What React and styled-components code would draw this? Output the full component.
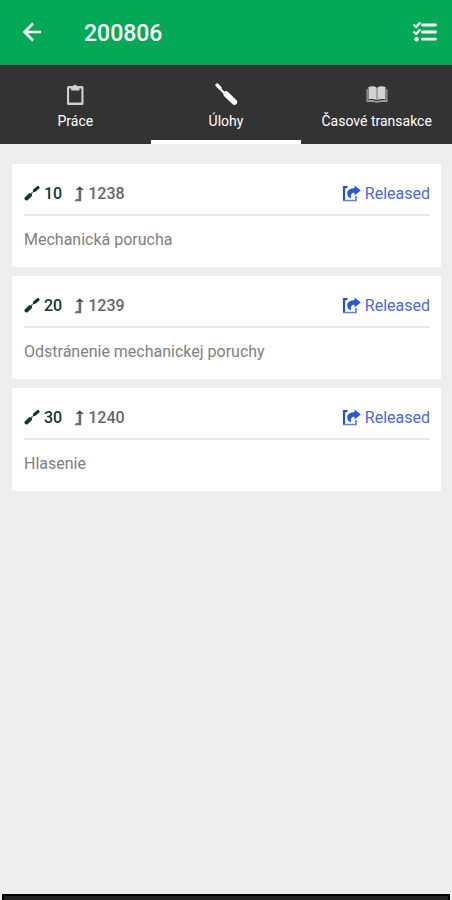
import React from "react";
import styled, { createGlobalStyle } from "styled-components";

const tasks = [
  { id: 10, number: 1238, status: "Released", text: "Mechanická porucha" },
  {
    id: 20,
    number: 1239,
    status: "Released",
    text: "Odstránenie mechanickej poruchy",
  },
  { id: 30, number: 1240, status: "Released", text: "Hlasenie" },
];

const BackIcon = () => (
  <svg width='20' height='20' viewBox='0 0 20 20' fill='none' aria-hidden='true'>
    <path d='M19 10H3M11 1.500L2.500 10l8.500 8.500' stroke='#fff' strokeWidth='2.500' />
  </svg>
);

const ChecklistIcon = () => (
  <svg width='24' height='20' viewBox='0 0 24 20' fill='none' aria-hidden='true'>
    <path d='M9.500 3h13M9.500 10h13M9.500 17.200h13' stroke='#fff' strokeWidth='2.800' strokeLinecap='round' />
    <path d='M1.200 3.200l2 1.800L6.700 1M1.200 10.200l2 1.800L6.700 8' stroke='#fff' strokeWidth='2.200' strokeLinecap='round' />
    <circle cx='3.500' cy='17.200' r='2.200' fill='#fff' />
  </svg>
);

const ClipboardIcon = () => (
  <svg width='20' height='24' viewBox='0 0 20 24' aria-hidden='true'>
    <path
      fillRule='evenodd'
      fill='#d0d0d0'
      d='M3.500 3H8a2.200 2.200 0 0 1 4 0h5a1.500 1.500 0 0 1 1.500 1.500v16A1.500 1.500 0 0 1 17 22H3.500A1.500 1.500 0 0 1 2 20.500v-16A1.500 1.500 0 0 1 3.500 3zm.6 2.500V19.500h12.300V5.500h-2V7.500H6.100V5.500z'
    />
  </svg>
);

const ScrewdriverIcon = () => (
  <svg width='24' height='24' viewBox='0 0 24 24' fill='none' aria-hidden='true'>
    <path d='M3 2l3 3' stroke='#fff' strokeWidth='3.200' strokeLinecap='round' />
    <path d='M4 3.500l8 8.500' stroke='#fff' strokeWidth='2' />
    <path
      d='M9.500 10c.5-1.700 2.400-2.600 4-1.500l9.300 8.900c1.700 2.600-1 5.800-3.900 4.200l-8.700-8.300c-.9-1.100-1.200-2.200-.7-3.300z'
      fill='#fff'
    />
  </svg>
);

const BookIcon = () => (
  <svg width='22' height='18' viewBox='0 0 22 18' aria-hidden='true'>
    <path d='M.5 3h1.300v11.300c3.500-.8 6.200-.4 8 .7h2.400c1.800-1.100 4.500-1.500 8-.7V3h1.300v13h-7.500c-.5 1-5.500 1-6 0H.5z' fill='#9c9c9c' />
    <path d='M2.500 1C5.500-.1 8.500 0 10.700 1.800v12.500c-2-1.400-4.900-1.700-8.200-.9z' fill='#d2d2d2' />
    <path d='M19.500 1c-3-1.100-6-1-8.200.8v12.500c2-1.400 4.900-1.700 8.200-.9z' fill='#d2d2d2' />
  </svg>
);

const ToolIcon = () => (
  <svg width='16' height='16' viewBox='0 0 16 16' fill='none' aria-hidden='true'>
    <path d='M5.500 9.500l5-5' stroke='#6b8078' strokeWidth='1.300' />
    <path d='M2.500 12.500L6 9.200' stroke='#0d4031' strokeWidth='4' strokeLinecap='round' />
    <path d='M10.500 4.500L14 1.500' stroke='#14372d' strokeWidth='3' strokeLinecap='round' />
  </svg>
);

const LevelUpIcon = () => (
  <svg width='10' height='18' viewBox='0 0 10 18' fill='none' aria-hidden='true'>
    <path d='M1.500 5L5.800 1.200 10 5z' fill='#555' />
    <path d='M4.600 4h2.600v12.300H.3l2-2.300h2.300z' fill='#6a6a6a' />
  </svg>
);

const ReleaseIcon = () => (
  <svg width='19' height='18' viewBox='0 0 19 18' fill='none' aria-hidden='true'>
    <path d='M5.500 2.200H2v13.300' stroke='#2350d4' strokeWidth='2.200' />
    <path d='M1 15.500h13V11' stroke='#5f80e3' strokeWidth='1.700' />
    <path
      d='M12.500.5l6.300 5-6.300 5V7.800C9.500 7.500 8.500 9.500 9 13.200 6.500 12.500 5 10.500 5.200 8 5.500 5 8.500 3.200 12.500 3.200z'
      fill='#2458df'
    />
  </svg>
);

const tabs = [
  { label: "Práce", icon: <ClipboardIcon /> },
  { label: "Úlohy", icon: <ScrewdriverIcon />, active: true },
  { label: "Časové transakce", icon: <BookIcon /> },
];

const App = () => {
  return (
    <Page>
      <GlobalStyle />
      <Header>
        <IconButton aria-label='Back'>
          <BackIcon />
        </IconButton>
        <Title>200806</Title>
        <IconButton aria-label='Tasks'>
          <ChecklistIcon />
        </IconButton>
      </Header>
      <Tabs role='tablist'>
        {tabs.map(({ label, icon, active }) => (
          <Tab key={label} role='tab' aria-selected={!!active} $active={active}>
            <TabIcon>{icon}</TabIcon>
            {label}
          </Tab>
        ))}
      </Tabs>
      <List>
        {tasks.map((task) => (
          <Card key={task.id}>
            <CardHeader>
              <ToolIcon />
              <TaskId>{task.id}</TaskId>
              <LevelUpIcon />
              <TaskNumber>{task.number}</TaskNumber>
              <Status>
                <ReleaseIcon />
                {task.status}
              </Status>
            </CardHeader>
            <Description>{task.text}</Description>
          </Card>
        ))}
      </List>
      <BottomBar />
    </Page>
  );
};

const GlobalStyle = createGlobalStyle`
  * {
    margin: 0;
    padding: 0;
    box-sizing: border-box;
  }
  body {
    background-color: #eee;
    font-family: Roboto, "Liberation Sans", sans-serif;
  }
  button {
    border: none;
    background: none;
    font: inherit;
    color: inherit;
    cursor: pointer;
  }
  svg {
    display: block;
    flex-shrink: 0;
  }
`;

const Page = styled.div`
  display: flex;
  flex-direction: column;
  min-height: 100vh;
`;

const Header = styled.header`
  display: flex;
  align-items: flex-start;
  padding: 20px 15px 17px 22px;
  background-color: #04a957;
  color: #fff;
`;

const IconButton = styled.button`
  display: flex;
  align-items: center;
  height: 23px;
`;

const Title = styled.h1`
  flex: 1;
  padding-left: 42px;
  font-size: 23px;
  font-weight: 500;
  line-height: 28px;
`;

const Tabs = styled.nav`
  display: grid;
  grid-template-columns: repeat(3, 1fr);
  background-color: #333;
  color: #fff;
`;

const Tab = styled.button`
  display: flex;
  flex-direction: column;
  align-items: center;
  padding: 16px 0 7px;
  border-bottom: 4px solid ${({ $active }) => ($active ? "#fff" : "transparent")};
  font-size: 14px;
  line-height: 24px;
  white-space: nowrap;
`;

const TabIcon = styled.span`
  display: flex;
  align-items: center;
  height: 28px;
`;

const List = styled.main`
  flex: 1;
  display: flex;
  flex-direction: column;
  gap: 9px;
  padding: 20px 11px 20px 12px;
`;

const Card = styled.article`
  padding: 16px 11px 15px 12px;
  background-color: #fff;
`;

const CardHeader = styled.div`
  display: flex;
  align-items: center;
  padding-bottom: 7px;
  border-bottom: 2px solid #e8e8e8;
  font-size: 16px;
  line-height: 27px;
`;

const TaskId = styled.span`
  padding: 0 12px 0 4px;
  color: #12352b;
  font-weight: 500;
`;

const TaskNumber = styled.span`
  padding-left: 4px;
  color: #666;
  font-weight: 500;
`;

const Status = styled.span`
  display: flex;
  align-items: center;
  gap: 4px;
  margin-left: auto;
  color: #4a68dc;
`;

const Description = styled.p`
  padding-top: 12px;
  color: #808080;
  font-size: 16px;
  line-height: 24px;
`;

const BottomBar = styled.footer`
  height: 6px;
  margin: 0 2px;
  border: 2px solid #000;
  border-bottom: none;
  background-color: #222;
`;

export default App;
